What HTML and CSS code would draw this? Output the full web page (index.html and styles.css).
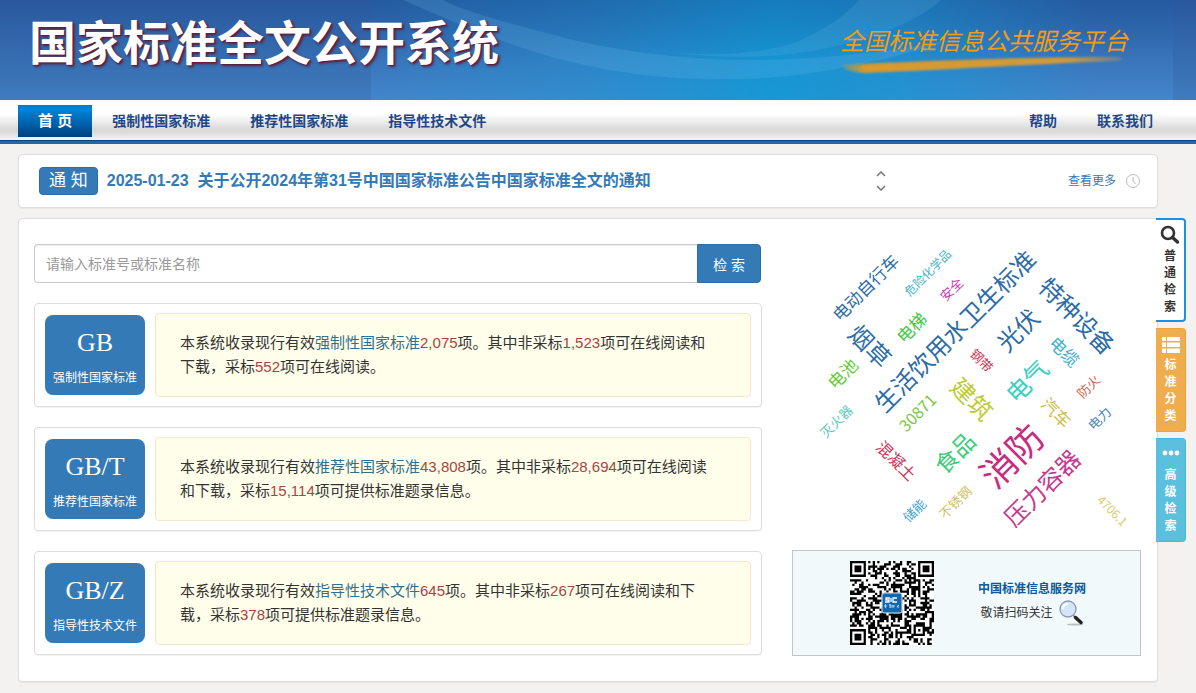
FILE: index.html
```html
<!DOCTYPE html>
<html lang="zh-CN">
<head>
<meta charset="utf-8">
<title>国家标准全文公开系统</title>
<link rel="stylesheet" href="styles.css">
</head>
<body>
<header class="banner">
  <svg class="banner-art" viewBox="0 0 802 100" preserveAspectRatio="none" aria-hidden="true">
    <defs>
      <linearGradient id="artBase" x1="0" y1="0" x2="0" y2="1">
        <stop offset="0" stop-color="#2b5ba3"/><stop offset="1" stop-color="#4386cb"/>
      </linearGradient>
      <linearGradient id="artGlow" x1="0" y1="0" x2="1" y2="0">
        <stop offset="0" stop-color="#159bd6" stop-opacity="0"/>
        <stop offset="0.28" stop-color="#159bd6" stop-opacity="0.4"/>
        <stop offset="0.5" stop-color="#0d9cd8" stop-opacity="0.8"/>
        <stop offset="0.66" stop-color="#159bd6" stop-opacity="0.65"/>
        <stop offset="0.9" stop-color="#159bd6" stop-opacity="0"/>
      </linearGradient>
      <linearGradient id="artShade" x1="0" y1="0" x2="0" y2="1">
        <stop offset="0" stop-color="#1a5a9c" stop-opacity="0.35"/><stop offset="0.6" stop-color="#1a5a9c" stop-opacity="0"/>
      </linearGradient>
    </defs>
    <rect width="802" height="100" fill="url(#artBase)"/>
    <rect width="802" height="100" fill="url(#artGlow)"/>
    <rect width="802" height="100" fill="url(#artShade)"/>
    <path d="M32 0C100 30 150 50 200 62C270 79 330 80 372 79C410 78 440 74 480 66C520 58 550 50 580 40C520 52 440 60 380 60C310 60 240 50 190 37C140 24 95 12 72 0Z" fill="#7cc4ec" fill-opacity="0.18"/>
    <path d="M255 43C310 60 400 58 440 35C462 24 478 12 488 0H570C540 28 470 50 410 55C350 60 290 54 255 43Z" fill="#7cc4ec" fill-opacity="0.15"/>
  </svg>
  <h1 class="site-title">国家标准全文公开系统</h1>
  <a class="platform" href="#">
    <span class="platform-name">全国标准信息公共服务平台</span>
    <svg class="platform-stroke" viewBox="0 0 288 22" aria-hidden="true">
      <defs>
        <linearGradient id="brush" x1="0" x2="1"><stop offset="0" stop-color="#d99a2b" stop-opacity="0.3"/><stop offset="0.08" stop-color="#d99a2b"/><stop offset="0.8" stop-color="#d09a3a"/><stop offset="1" stop-color="#c09a50" stop-opacity="0.3"/></linearGradient>
        <filter id="soft"><feGaussianBlur stdDeviation="1"/></filter>
      </defs>
      <path d="M3 11C60 8 180 3 278 3Q286 5 278 7C190 10 90 17 22 19Q8 17 3 14Z" fill="url(#brush)" filter="url(#soft)"/>
    </svg>
  </a>
</header>

<nav class="menu">
  <a class="menu-item menu-home" href="#">首 页</a>
  <a class="menu-item" href="#">强制性国家标准</a>
  <a class="menu-item" href="#">推荐性国家标准</a>
  <a class="menu-item" href="#">指导性技术文件</a>
  <span class="menu-space"></span>
  <a class="menu-item" href="#">帮助</a>
  <a class="menu-item" href="#">联系我们</a>
</nav>

<div class="page">
  <section class="panel notice">
    <span class="notice-tag">通 知</span>
    <a class="notice-link" href="#">2025-01-23&nbsp; 关于公开2024年第31号中国国家标准公告中国家标准全文的通知</a>
    <div class="notice-arrows">
      <button class="arrow" type="button" aria-label="上一条"><svg viewBox="0 0 10 6"><path d="M1 5L5 1L9 5"/></svg></button>
      <button class="arrow" type="button" aria-label="下一条"><svg viewBox="0 0 10 6"><path d="M1 1L5 5L9 1"/></svg></button>
    </div>
    <a class="notice-more" href="#">查看更多</a>
    <svg class="clock" viewBox="0 0 16 16" aria-hidden="true"><circle cx="8" cy="8" r="6.5"/><path d="M8 4V8L10.500 11"/></svg>
  </section>

  <main class="panel content">
    <div class="left">
      <form class="search">
        <input class="search-input" type="text" aria-label="标准号或标准名称" placeholder="请输入标准号或标准名称">
        <button class="search-button" type="button">检 索</button>
      </form>
      <section class="card">
        <a class="tile" href="#"><span class="tile-code">GB</span><span class="tile-name">强制性国家标准</span></a>
        <p class="summary">本系统收录现行有效<a href="#">强制性国家标准</a><b>2,075</b>项。其中非采标<b>1,523</b>项可在线阅读和下载，采标<b>552</b>项可在线阅读。</p>
      </section>
      <section class="card">
        <a class="tile" href="#"><span class="tile-code">GB/T</span><span class="tile-name">推荐性国家标准</span></a>
        <p class="summary">本系统收录现行有效<a href="#">推荐性国家标准</a><b>43,808</b>项。其中非采标<b>28,694</b>项可在线阅读和下载，采标<b>15,114</b>项可提供标准题录信息。</p>
      </section>
      <section class="card">
        <a class="tile" href="#"><span class="tile-code">GB/Z</span><span class="tile-name">指导性技术文件</span></a>
        <p class="summary">本系统收录现行有效<a href="#">指导性技术文件</a><b>645</b>项。其中非采标<b>267</b>项可在线阅读和下载，采标<b>378</b>项可提供标准题录信息。</p>
      </section>
    </div>

    <aside class="right">
      <svg class="cloud" viewBox="0 0 349 306">
        <g fill="#2b6ca8">
          <text font-size="17" transform="translate(73 43) rotate(-45)">电动自行车</text>
          <text font-size="24" transform="translate(162 86) rotate(-45)">生活饮用水卫生标准</text>
          <text font-size="24" transform="translate(286 71) rotate(45)">特种设备</text>
          <text font-size="24" transform="translate(79 101) rotate(45)">烟草</text>
          <text font-size="24" transform="translate(225 85) rotate(-45)">光伏</text>
        </g>
        <text fill="#4bb3c9" font-size="12" transform="translate(135 28) rotate(-45)">危险化学品</text>
        <text fill="#c938b4" font-size="13" transform="translate(159 45) rotate(-45)">安全</text>
        <text fill="#3fca3f" font-size="17" transform="translate(119 83) rotate(-45)">电梯</text>
        <text fill="#3fb0cc" font-size="17" transform="translate(273 107) rotate(45)">电缆</text>
        <text fill="#cc3350" font-size="13" transform="translate(190 116) rotate(45)">钢带</text>
        <text fill="#63cc33" font-size="17" transform="translate(50 129) rotate(-45)">电池</text>
        <text fill="#bccb33" font-size="24" transform="translate(181 154) rotate(45)">建筑</text>
        <text fill="#38cfc0" font-size="24" transform="translate(234 136) rotate(-45)">电气</text>
        <text fill="#cc6650" font-size="13" transform="translate(296 142) rotate(-45)">防火</text>
        <text fill="#d0bd45" font-size="17" transform="translate(265 168) rotate(45)">汽车</text>
        <text fill="#4785c0" font-size="13" transform="translate(307 174) rotate(-45)">电力</text>
        <text fill="#5ccbbb" font-size="13" transform="translate(44 177) rotate(-45)">灭火器</text>
        <text fill="#78c83c" font-size="16" transform="translate(125 168) rotate(-45)">30871</text>
        <text fill="#c93355" font-size="16" transform="translate(105 216) rotate(45)">混凝土</text>
        <text fill="#38cc78" font-size="23" transform="translate(162 208) rotate(-45)">食品</text>
        <text fill="#c92b80" font-size="36" transform="translate(218 210) rotate(-45)">消防</text>
        <text fill="#c9388f" font-size="24" transform="translate(249 243) rotate(-45)">压力容器</text>
        <text fill="#45a5cc" font-size="13" transform="translate(122 266) rotate(-45)">储能</text>
        <text fill="#d0bf65" font-size="13" transform="translate(163 258) rotate(-45)">不锈钢</text>
        <text fill="#d6ce70" font-size="12" transform="translate(321 266) rotate(45)">4706.1</text>
      </svg>
      <section class="follow">
        <div class="qr">
          <svg class="qr-code" id="qr" viewBox="0 0 37 37" role="img" aria-label="二维码"></svg>
          <svg class="qr-logo" viewBox="0 0 22 22" aria-hidden="true">
            <rect x="1" y="1" width="20" height="20" rx="2" fill="#1269b0" stroke="#d8e8f2"/>
            <path d="M9 6H5V8H8V10H4M10 6V10M16 6H12V10H16" fill="none" stroke="#fff" stroke-width="1.300"/>
            <path d="M3 14H6M4.500 12V16M8 13H10V16M9 12V16M12 13V16M11 14H14M16 15L18 13M17 13V16" fill="none" stroke="#d6e9f7" stroke-width="0.800"/>
          </svg>
        </div>
        <div class="follow-text">
          <a class="follow-name" href="#">中国标准信息服务网</a>
          <div class="follow-hint">敬请扫码关注
            <svg class="magnifier" viewBox="0 0 26 26" aria-hidden="true">
              <ellipse cx="17" cy="24.500" rx="8" ry="1" fill="#b9bec0"/>
              <path d="M15 15L22 22" stroke="#9aa0a5" stroke-width="2"/>
              <path d="M17.500 17.500L23 22.500" stroke="#222" stroke-width="3.500" stroke-linecap="round"/>
              <circle cx="10" cy="9" r="8" fill="#d3e5fb" stroke="#8d98ad" stroke-width="1.300"/>
              <path d="M5 9Q5 4 10 4" stroke="#fff" stroke-width="2" fill="none"/>
            </svg>
          </div>
        </div>
      </section>
    </aside>

    <div class="side-tabs">
      <a class="side-tab tab-basic" href="#">
        <svg viewBox="0 0 20 20" aria-hidden="true"><circle cx="8" cy="8" r="6" fill="none" stroke="currentColor" stroke-width="2.600"/><path d="M12.500 12.500L17.500 17" stroke="currentColor" stroke-width="3.400" stroke-linecap="round"/></svg>
        <span>普通检索</span>
      </a>
      <a class="side-tab tab-class" href="#">
        <svg viewBox="0 0 20 20" aria-hidden="true"><path d="M1 2H5V6H1ZM6 2H19V6H6ZM1 7.500H5V12H1ZM6 7.500H19V12H6ZM1 13.500H5V18H1ZM6 13.500H19V18H6Z" fill="currentColor"/></svg>
        <span>标准分类</span>
      </a>
      <a class="side-tab tab-advanced" href="#">
        <svg viewBox="0 0 20 20" aria-hidden="true"><g fill="currentColor"><circle cx="4" cy="8" r="2.400"/><circle cx="10" cy="8" r="2.400"/><circle cx="16" cy="8" r="2.400"/></g></svg>
        <span>高级检索</span>
      </a>
    </div>
  </main>
</div>
<script src="qr.js"></script>
</body>
</html>
```
FILE: styles.css
```css
* { box-sizing: border-box; }
body {
  margin: 0;
  background: #f3f2f1;
  color: #333;
  font: 14px/20px "Liberation Sans", "Noto Sans CJK SC", sans-serif;
}
a { text-decoration: none; color: #337ab7; }
button { font-family: inherit; cursor: pointer; }

.banner {
  position: relative;
  display: flex;
  justify-content: space-between;
  height: 100px;
  padding: 0 68px 0 29px;
  background: linear-gradient(#29589e, #3f7cbe);
  overflow: hidden;
}
.banner-art { position: absolute; left: 31%; right: 23px; top: 0; width: calc(69% - 23px); height: 100px; }
.site-title {
  position: relative;
  margin: 0;
  padding-top: 16px;
  color: #fff;
  font-size: 47px;
  line-height: 56px;
  font-weight: bold;
  text-shadow: 2px 2px 3px #5c2040, 1px 1px 1px #5c2040;
  white-space: nowrap;
}
.platform { position: relative; display: flex; flex-direction: column; padding-top: 26px; }
.platform-name { color: #f79c10; font-family: "KaiTi", "STKaiti", "Noto Sans CJK SC", sans-serif; font-size: 24px; line-height: 28px; font-style: italic; white-space: nowrap; }
.platform-stroke { width: 288px; height: 22px; }

.menu {
  display: flex;
  align-items: flex-start;
  height: 44px;
  padding: 5px 23px 0 18px;
  background: linear-gradient(#f8fafd, #fff 8px, #fff 14px, #f0f0f0 20px, #dadada 29px, #dadada 32px, #f2f2f2 39px);
  border-bottom: 3px solid #1b69a8;
  box-shadow: inset 0 -1px #0c4478;
}
.menu-item { padding: 0 20px; color: #1f4788; font-size: 14px; line-height: 32px; font-weight: bold; white-space: nowrap; }
.menu-home { color: #fff; font-size: 15px; background: linear-gradient(#0879c2, #0084da 4px, #00407f); }
.menu-space { flex: 1; }

.page { padding: 10px 38px 10px 18px; }
.panel { background: #fff; border: 1px solid #ddd; border-radius: 4px; box-shadow: 0 1px 1px rgba(0, 0, 0, 0.05); }

.notice { display: flex; align-items: center; height: 54px; padding: 0 16px 0 20px; }
.notice-tag { padding: 0 9px; color: #fff; background: #337ab7; border: 1px solid #2e6da4; border-radius: 4px; font-size: 17px; line-height: 26px; white-space: nowrap; }
.notice-link { flex: 1; margin-left: 9px; font-size: 16px; font-weight: bold; }
.notice-arrows { display: flex; flex-direction: column; gap: 8px; margin-right: 182px; }
.arrow { width: 10px; height: 6px; padding: 0; border: 0; background: none; }
.arrow svg { display: block; width: 10px; height: 6px; fill: none; stroke: #777; stroke-width: 1.5; }
.notice-more { font-size: 12px; }
.clock { width: 16px; height: 16px; margin-left: 9px; fill: none; stroke: #bbb; }

.content { position: relative; display: flex; gap: 30px; margin-top: 10px; padding: 25px 16px 25px 15px; }
.left { flex: 728; min-width: 0; display: flex; flex-direction: column; gap: 20px; }
.right { flex: 349; min-width: 0; display: flex; flex-direction: column; }

.search { display: flex; height: 39px; margin-right: 1px; }
.search-input {
  flex: 1;
  min-width: 0;
  padding: 0 11px;
  border: 1px solid #ccc;
  border-right: 0;
  border-radius: 4px 0 0 4px;
  box-shadow: inset 0 1px 1px rgba(0, 0, 0, 0.075);
  color: #555;
  font: inherit;
}
.search-input::placeholder { color: #999; }
.search-button { padding: 0 15px; border: 1px solid #2e6da4; border-radius: 0 4px 4px 0; background: #337ab7; color: #fff; font-size: 14px; }

.card { display: flex; align-items: center; gap: 10px; height: 104px; padding: 0 10px; border: 1px solid #ddd; border-radius: 4px; box-shadow: 0 1px 1px rgba(0, 0, 0, 0.05); }
.tile { display: flex; flex: 0 0 100px; flex-direction: column; align-items: center; height: 80px; padding-top: 12px; border-radius: 8px; background: #337ab7; color: #fff; }
.tile-code { font-family: "Liberation Serif", serif; font-size: 26px; line-height: 32px; }
.tile-name { margin-top: 9px; font-size: 12px; line-height: 20px; }
.summary {
  flex: 1;
  margin: 0;
  padding: 17px 34px 17px 24px;
  border: 1px solid #f5e8cb;
  border-radius: 4px;
  background: #fffeea;
  font-size: 15px;
  line-height: 24px;
}
.summary a { color: #31708f; }
.summary b { color: #a94442; font-weight: normal; }

.cloud { display: block; width: 100%; height: 306px; overflow: visible; }
.cloud text { font-family: "Noto Sans CJK SC", sans-serif; text-anchor: middle; dominant-baseline: central; }

.follow { display: flex; align-items: center; height: 106px; padding-left: 57px; border: 1px solid #c0c6c8; background: #f1f9fb; }
.qr { display: grid; place-items: center; width: 84px; }
.qr > svg { grid-area: 1 / 1; }
.qr-code { width: 84px; height: 84px; background: #fff; }
.qr-logo { width: 22px; height: 22px; }
.follow-text { display: flex; flex-direction: column; align-items: center; margin-left: 44px; font-size: 12px; }
.follow-name { color: #0b5a9d; font-weight: bold; line-height: 20px; }
.follow-hint { display: flex; align-items: center; gap: 5px; line-height: 28px; }
.magnifier { width: 26px; height: 26px; }

.side-tabs { position: absolute; top: -1px; right: -29px; display: flex; flex-direction: column; gap: 6px; }
.side-tab { display: flex; flex-direction: column; align-items: center; justify-content: space-between; width: 30px; height: 104px; padding: 6px 0; border-radius: 0 4px 4px 0; color: #fff; font-size: 12px; font-weight: bold; line-height: 17px; }
.side-tab svg { width: 20px; height: 20px; }
.side-tab span { width: 12px; word-break: break-all; }
.tab-basic { padding: 5px 0 4px; background: #fff; border: 2px solid #1e8fe6; border-left: 0; color: #333; }
.tab-class { background: #f0ad4e; border: 1px solid #eea236; border-left: 0; }
.tab-advanced { background: #5bc0de; border: 1px solid #46b8da; border-left: 0; }
```
FILE: qr.js
```js
(function () {
  var size = 37, seed = 20250123, d = "";
  function random() {
    seed = (seed * 1103515245 + 12345) % 2147483648;
    return seed / 2147483648;
  }
  function ring(x, y, cx, cy) {
    return Math.max(Math.abs(x - cx), Math.abs(y - cy));
  }
  for (var y = 0; y < size; y++) {
    for (var x = 0; x < size; x++) {
      var dark = random() > 0.5;
      [[3, 3], [33, 3], [3, 33]].forEach(function (c) {
        var r = ring(x, y, c[0], c[1]);
        if (r <= 4) dark = r < 2 || r === 3;
      });
      var a = ring(x, y, 30, 30);
      if (a <= 2) dark = a !== 1;
      if (dark) d += "M" + x + " " + y + "h1v1h-1z";
    }
  }
  var path = document.createElementNS("http://www.w3.org/2000/svg", "path");
  path.setAttribute("d", d);
  document.getElementById("qr").appendChild(path);
})();
```
